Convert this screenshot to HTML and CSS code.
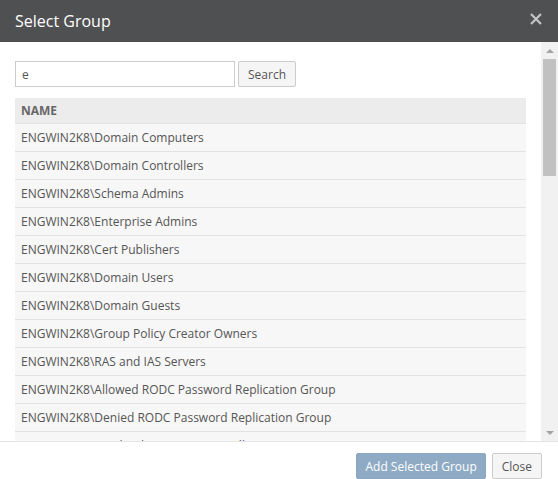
FILE: index.html
```
<!DOCTYPE html>
<html lang="en">

<head>
    <meta charset="UTF-8">
    <meta name="viewport" content="width=device-width, initial-scale=1.0">
    <title>Select Group</title>
    <link rel="stylesheet" href="styles.css">
</head>

<body>
    <div class="modal">
        <div class="modal-header">
            <h4 class="modal-title">Select Group</h4>
            <button class="close-btn" aria-label="Close">
                <svg width="12" height="12" viewBox="0 0 12 12">
                    <path d="M1 1L11 11M11 1L1 11" stroke="#c4c4c4" stroke-width="2.2" fill="none" />
                </svg>
            </button>
        </div>
        <div class="modal-body">
            <div class="scroll-content">
                <div class="search-row">
                    <input class="search-input" type="text" value="e">
                    <button class="btn">Search</button>
                </div>
                <table class="group-table">
                    <thead>
                        <tr><th>NAME</th></tr>
                    </thead>
                    <tbody>
                        <tr><td>ENGWIN2K8\Domain Computers</td></tr>
                        <tr><td>ENGWIN2K8\Domain Controllers</td></tr>
                        <tr><td>ENGWIN2K8\Schema Admins</td></tr>
                        <tr><td>ENGWIN2K8\Enterprise Admins</td></tr>
                        <tr><td>ENGWIN2K8\Cert Publishers</td></tr>
                        <tr><td>ENGWIN2K8\Domain Users</td></tr>
                        <tr><td>ENGWIN2K8\Domain Guests</td></tr>
                        <tr><td>ENGWIN2K8\Group Policy Creator Owners</td></tr>
                        <tr><td>ENGWIN2K8\RAS and IAS Servers</td></tr>
                        <tr><td>ENGWIN2K8\Allowed RODC Password Replication Group</td></tr>
                        <tr><td>ENGWIN2K8\Denied RODC Password Replication Group</td></tr>
                        <tr><td>ENGWIN2K8\Read-only Domain Controllers</td></tr>
                        <tr><td>ENGWIN2K8\Enterprise Read-only Domain Controllers</td></tr>
                        <tr><td>ENGWIN2K8\DnsUpdateProxy</td></tr>
                    </tbody>
                </table>
            </div>
            <div class="scrollbar">
                <div class="scroll-arrow up"></div>
                <div class="scroll-track">
                    <div class="scroll-thumb"></div>
                </div>
                <div class="scroll-arrow down"></div>
            </div>
        </div>
        <div class="modal-footer">
            <button class="btn btn-primary" disabled>Add Selected Group</button>
            <button class="btn">Close</button>
        </div>
    </div>
</body>

</html>
```

FILE: styles.css
```
body {
    margin: 0;
    font-family: "Open Sans", Arial, sans-serif;
    font-size: 12px;
    color: #555;
    background-color: #fff;
}

.modal {
    display: flex;
    flex-direction: column;
    width: 558px;
    height: 479px;
}

.modal-header {
    display: flex;
    justify-content: space-between;
    align-items: center;
    height: 42px;
    padding: 0 16px 0 15px;
    background-color: #4f5052;
    box-sizing: border-box;
    flex-shrink: 0;
}

.modal-title {
    margin: 0;
    font-size: 16px;
    font-weight: normal;
    color: #fff;
}

.close-btn {
    display: flex;
    background: none;
    border: none;
    padding: 0;
    margin-top: -4px;
    cursor: pointer;
}

.modal-body {
    flex: 1;
    display: flex;
    min-height: 0;
}

.scroll-content {
    flex: 1;
    overflow: hidden;
    padding: 19px 15px 0 15px;
}

.scrollbar {
    width: 17px;
    display: flex;
    flex-direction: column;
    background-color: #f1f1f1;
}

.scroll-arrow {
    height: 17px;
    display: flex;
    justify-content: center;
    align-items: center;
}

.scroll-arrow::before {
    content: "";
    border-left: 4px solid transparent;
    border-right: 4px solid transparent;
}

.scroll-arrow.up::before {
    border-bottom: 4px solid #a3a3a3;
}

.scroll-arrow.down::before {
    border-top: 4px solid #a3a3a3;
}

.scroll-track {
    flex: 1;
    padding: 0 2px;
}

.scroll-thumb {
    height: 117px;
    background-color: #c1c1c1;
}

.search-row {
    display: flex;
    gap: 3px;
    align-items: center;
    margin-bottom: 11px;
}

.search-input {
    width: 220px;
    height: 26px;
    box-sizing: border-box;
    border: 1px solid #ccc;
    padding: 0 6px;
    font-family: "Open Sans", Arial, sans-serif;
    font-size: 12px;
    color: #555;
}

.btn {
    height: 26px;
    padding: 0 9px;
    font-family: "Open Sans", Arial, sans-serif;
    font-size: 12px;
    color: #555;
    background-color: #f5f5f5;
    border: 1px solid #ccc;
    border-radius: 2px;
    cursor: pointer;
}

.btn-primary {
    color: #fff;
    background-color: #8eaac4;
    border-color: #8aa6c0;
    padding: 0 8px;
}

.group-table {
    width: 100%;
    border-collapse: collapse;
}

.group-table th {
    text-align: left;
    font-weight: bold;
    color: #666;
    height: 25px;
    padding: 0 6px;
    background-color: #ececec;
    border-bottom: 1px solid #e3e3e3;
}

.group-table td {
    height: 27px;
    padding: 0 6px;
    background-color: #f7f7f7;
    border-bottom: 1px solid #e3e3e3;
    white-space: nowrap;
}

.modal-footer {
    display: flex;
    justify-content: flex-end;
    gap: 6px;
    height: 38px;
    box-sizing: border-box;
    padding: 11px 16px 0 0;
    border-top: 1px solid #e5e5e5;
    flex-shrink: 0;
}
```
